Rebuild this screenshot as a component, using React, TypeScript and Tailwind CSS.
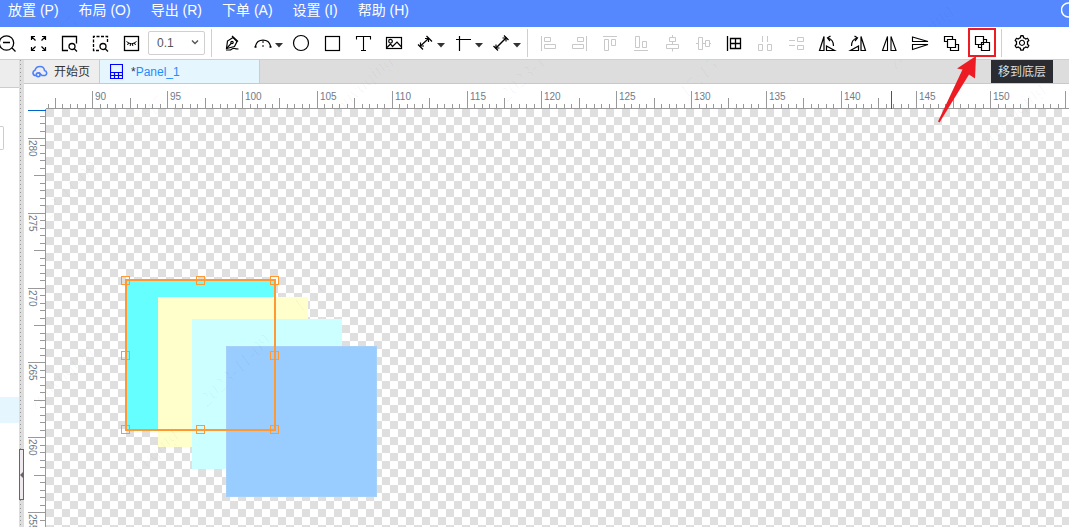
import React, { useEffect, useState } from "react";
import { AiOutlineSetting } from "react-icons/ai";

const menus = ["放置 (P)", "布局 (O)", "导出 (R)", "下单 (A)", "设置 (I)", "帮助 (H)"];

function Icon({ children, wide }: { children: React.ReactNode; wide?: boolean }) {
  return (
    <svg
      viewBox={wide ? "-15 -16 38 32" : "-15 -16 31 32"}
      width={wide ? 38 : 31}
      height={32}
      fill="none"
      stroke="currentColor"
      strokeWidth="1"
      aria-hidden="true"
    >
      {children}
      {wide && <path d="M12 0h8l-4 4.5z" fill="#333" stroke="none" />}
    </svg>
  );
}

type Tool = {
  label: string;
  icon: React.ReactNode;
  wide?: boolean;
  disabled?: boolean;
};

const viewTools: Tool[] = [
  {
    label: "缩小",
    icon: (
      <g strokeWidth="1.3">
        <circle cx="-0.5" cy="0" r="7.2" />
        <path d="M-4-.5h7M5 5l3.5 3.5" />
      </g>
    ),
  },
  {
    label: "适应全部",
    icon: (
      <g strokeWidth="1.2">
        <path d="M-6.500-3v-3.500h3.500M-6.500-6.500l4 4M7.500-3v-3.500h-3.500M7.500-6.500l-4 4M-6.500 4v3.500h3.500M-6.500 7.500l4-4M7.500 4v3.500h-3.500M7.500 7.500l-4-4" />
      </g>
    ),
  },
  {
    label: "缩放区域",
    icon: (
      <g>
        <path d="M-1 7.5h-5.500v-14h14v7" strokeWidth="1.3" />
        <circle cx="3" cy="3.5" r="3" strokeWidth="1.3" />
        <path d="M5.500 6l2.500 2.500" strokeWidth="1.300" />
      </g>
    ),
  },
  {
    label: "适应选中",
    icon: (
      <g>
        <path d="M-1 7.5h-5.500v-14h14v7" strokeWidth="1.3" strokeDasharray="3 1.500" />
        <circle cx="3" cy="3.5" r="3" strokeWidth="1.3" />
        <path d="M5.500 6l2.500 2.500" strokeWidth="1.300" />
      </g>
    ),
  },
  {
    label: "预览",
    icon: (
      <g>
        <rect x="-6.500" y="-6.500" width="14" height="14" strokeWidth="1.3" />
        <path d="M-4.500-1.500Q.5 3 5.500-1.500M-3.500 2l1.200-2.200M4.500 2L3.300-.2M-.8 3L-.5.8M1.800 3L1.500.8" />
      </g>
    ),
  },
];

const drawTools: Tool[] = [
  {
    label: "钢笔",
    icon: (
      <g strokeWidth="1.2">
        <path d="M-5.500 5.500L-4.500-2L1-5.500L5-1.500L2.500 3.500Z" />
        <path d="M0-7l6 5.500M-5.500 5.500L-.5.2" />
        <circle cx="0" cy="-.5" r="1.200" />
        <path d="M-6 7h4.500Q1 5 2.500 5.500T6.500 6" />
      </g>
    ),
  },
  {
    label: "圆弧",
    wide: true,
    icon: (
      <g>
        <path d="M-7.500 4v-1A7.700 7.700 0 0 1 7.500 3v1" strokeWidth="1.2" />
        <path d="M0-2v2M0 2v2" />
        <path d="M-8.500 4h2M6.500 4h2" strokeWidth="1.600" />
      </g>
    ),
  },
  { label: "圆形", icon: <circle cx="0" cy="0" r="7.500" strokeWidth="1.2" /> },
  { label: "矩形", icon: <rect x="-6.500" y="-6.500" width="14" height="14" strokeWidth="1.2" /> },
  { label: "文本", icon: <path d="M-6.500-3.500v-3h14v3M.5-6.500v14M-2 7.500h5" strokeWidth="1.1" /> },
  {
    label: "图片",
    icon: (
      <g strokeWidth="1.2">
        <rect x="-7.500" y="-5.500" width="15" height="11" />
        <circle cx="-3.500" cy="-1.800" r="1.800" />
        <path d="M-7 4.500L-3.500 1L-1.500 3.500L3-1L7 3.500" />
      </g>
    ),
  },
  {
    label: "尺寸",
    wide: true,
    icon: (
      <g strokeWidth="1.2">
        <path d="M-4 2.500L3-4" />
        <path d="M-7 1.500L-2 6.500M1.500-7L7-1.500" />
        <path d="M-4.500-.5v3.500h3.500M0-4.500h3.500v3.500" />
      </g>
    ),
  },
  { label: "画布原点", wide: true, icon: <path d="M-3.500-7v15M-7-3.500h15" strokeWidth="1.2" /> },
  {
    label: "测量",
    wide: true,
    icon: (
      <g strokeWidth="1.2">
        <path d="M-5 5L5-5" strokeWidth="1.400" />
        <path d="M-7.500 3l4.500 4.500M3-7.500l4.500 4.500" />
        <path d="M-5 1.500v3.500h3.500M1.500-5h3.500v3.500" />
      </g>
    ),
  },
];

const arrangeTools: Tool[] = [
  { label: "左对齐", disabled: true, icon: <path d="M-6.500-7v15M-3.500-5.500h6v4h-6zM-3.500 1.500h11v4h-11z" /> },
  { label: "右对齐", disabled: true, icon: <path d="M7.500-7v15M-1.500-5.500h6v4h-6zM-6.500 1.500h11v4h-11z" /> },
  { label: "顶部对齐", disabled: true, icon: <path d="M-7-6.500h14M-5.500-3.500h4v11h-4zM1.500-3.500h4v6h-4z" /> },
  { label: "底部对齐", disabled: true, icon: <path d="M-7 7.500h14M-5.500-6.500h4v11h-4zM1.500-1.500h4v6h-4z" /> },
  { label: "水平居中", disabled: true, icon: <path d="M.5-8v3M.5-1v2.500M.5 5.500v3M-2.500-5.500h6v4h-6zM-5.500 1.500h12v4h-12z" /> },
  { label: "垂直居中", disabled: true, icon: <path d="M-7 .5h2M-1 .5h3M6 .5h2M-4.500-5.500h4v12h-4zM2.500-2.500h4v6h-4z" /> },
  {
    label: "对齐网格",
    icon: <path d="M-6.500-7v15M-3.500-4.500h10v10h-10zM1.500-4.500v10M-3.500.5h10" strokeWidth="1.3" />,
  },
  { label: "水平分布", disabled: true, icon: <path d="M-2.500-7v6M2.500-7v6M-6.500 1.500h4v6h-4zM2.500 1.500h4v6h-4z" /> },
  { label: "垂直分布", disabled: true, icon: <path d="M-7-2.500h6M-7 2.500h6M1.500-5.500h6v4h-6zM1.500 2.500h6v4h-6z" /> },
  {
    label: "左旋转",
    icon: (
      <g strokeWidth="1.2">
        <path d="M-7.500 7.500L-3-6.500v14zM-.5 3v4.500h8z" />
        <path d="M1-5q5.500 1.500 5.500 8M3.500-7L.5-5l2.500 3" />
      </g>
    ),
  },
  {
    label: "右旋转",
    icon: (
      <g strokeWidth="1.2">
        <path d="M7.500 7.500L3-6.500v14zM.5 3v4.500h-8z" />
        <path d="M-1-5q-5.500 1.500-5.500 8M-3.500-7L-.5-5l-2.500 3" />
      </g>
    ),
  },
  { label: "水平翻转", icon: <path d="M-6.500 7.500L-1.500-6.500v14zM7 7.500L2-6.500v14z" strokeWidth="1.1" /> },
  { label: "垂直翻转", icon: <path d="M-7.500-6L8-1.500h-15.500zM-7.500 6.500L8 1.500h-15.500z" strokeWidth="1.1" /> },
  {
    label: "移到顶层",
    icon: <path d="M-3.500-1.500h-3v-5h8v3M4.500 1.500h3v6h-8v-3M-3.500-3.500h8v8h-8z" strokeWidth="1.2" />,
  },
];

function ToolButton({ tool }: { tool: Tool }) {
  return (
    <button
      type="button"
      aria-label={tool.label}
      disabled={tool.disabled}
      className="shrink-0 text-black disabled:text-[#c9c9c9]"
    >
      <Icon wide={tool.wide}>{tool.icon}</Icon>
    </button>
  );
}

function Divider() {
  return <span className="h-7 w-px shrink-0 bg-[#cfcfcf]" />;
}

const STEP = 7.483;

function useWindowSize() {
  const read = () => ({ width: window.innerWidth, height: window.innerHeight });
  const [size, setSize] = useState(read);
  useEffect(() => {
    const update = () => setSize(read());
    window.addEventListener("resize", update);
    return () => window.removeEventListener("resize", update);
  }, []);
  return size;
}

function ticksBetween(origin: number, from: number, to: number) {
  const first = Math.ceil((from - origin) / STEP);
  const last = Math.floor((to - origin) / STEP);
  return Array.from({ length: Math.max(0, last - first + 1) }, (_, i) => first + i);
}

function TopRuler({ length }: { length: number }) {
  return (
    <svg className="block h-[25px] w-full bg-white" aria-hidden="true">
      {ticksBetween(68.4, 22, length).map((n) => {
        const x = Math.round(68.4 + n * STEP);
        const major = n % 10 === 0;
        const h = major ? 18 : n % 5 === 0 ? 11 : 5;
        return (
          <g key={n}>
            <rect x={x} y={25 - h} width="1" height={h} fill="#999" />
            {major && x + 20 < length && (
              <text x={x + 3} y="16" fontSize="10" fill="#6f7b8a" fontFamily="Liberation Sans, Arial, sans-serif">
                {90 + n / 2}
              </text>
            )}
          </g>
        );
      })}
      <rect x="22" y="24" width="100%" height="1" fill="#999" />
      <rect x="867" y="7" width="1" height="18" fill="#0066cc" />
    </svg>
  );
}

function SideRuler({ length }: { length: number }) {
  return (
    <svg className="block h-full w-[22px] shrink-0 bg-white" aria-hidden="true">
      {ticksBetween(29, 6, length).map((n) => {
        const y = Math.round(29 + n * STEP);
        const major = n % 10 === 0;
        const w = major ? 18 : n % 5 === 0 ? 12 : 6;
        return (
          <g key={n}>
            <rect x={22 - w} y={y} width={w} height="1" fill="#999" />
            {major && (
              <text
                transform={`translate(5 ${y + 2}) rotate(90)`}
                fontSize="10"
                fill="#6f7b8a"
                fontFamily="Liberation Sans, Arial, sans-serif"
              >
                {280 - n / 2}
              </text>
            )}
          </g>
        );
      })}
      <rect x="21" y="0" width="1" height="100%" fill="#999" />
      <rect x="4" y="1" width="18" height="1" fill="#0066cc" />
    </svg>
  );
}

const handles = [
  [4, 4], [79, 4], [153, 4],
  [4, 79], [153, 79],
  [4, 153], [79, 153], [153, 153],
];

function Canvas() {
  return (
    <div className="relative min-w-0 flex-1 overflow-hidden bg-[repeating-conic-gradient(#ffffff_0_25%,#dfdfdf_0_50%)] bg-[length:16px_16px]">
      <div className="absolute left-[79px] top-[171px] size-[150px] bg-[#66ffff]" />
      <div className="absolute left-[112px] top-[188px] size-[150px] bg-[#ffffcc]" />
      <div className="absolute left-[146px] top-[210px] size-[150px] bg-[#ccffff]" />
      <div className="absolute left-[180px] top-[237px] size-[151px] border border-[#a5d0fa] bg-[#99ccff]" />
      <svg className="absolute left-[75px] top-[167px]" width="160" height="160" fill="none" stroke="#ff9933" aria-hidden="true">
        <rect x="5" y="4" width="149" height="150" strokeWidth="2" />
        {handles.map(([x, y]) => (
          <rect key={`${x}-${y}`} x={x - 3.5} y={y - 3.5} width="8" height="8" />
        ))}
      </svg>
    </div>
  );
}

function Marks() {
  const base =
    "absolute -translate-x-1/2 -translate-y-1/2 -rotate-45 whitespace-nowrap font-['Liberation_Serif',serif] text-xl italic text-black/3";
  return (
    <div className="pointer-events-none absolute inset-0 overflow-hidden" aria-hidden="true">
      <span className={`${base} left-[58px] top-[36px]`}>17:15</span>
      <span className={`${base} left-[146px] top-[115px]`}>17:15</span>
      <span className={`${base} left-[360px] top-[86px]`}>zouyuqing</span>
      <span className={`${base} left-[535px] top-[65px]`}>2023-11-09</span>
      <span className={`${base} left-[698px] top-[78px]`}>17:15</span>
      <span className={`${base} left-[920px] top-[36px]`}>zouyuqing</span>
      <span className={`${base} left-[1012px] top-[114px]`}>zouyuqing</span>
      <span className={`${base} left-[62px] top-[197px]`}>2023-11-09</span>
      <span className={`${base} left-[60px] top-[376px]`}>zouyuqing</span>
      <span className={`${base} left-[235px] top-[370px]`}>2023-11-09</span>
      <span className={`${base} left-[145px] top-[460px]`}>zouyuqing</span>
      <span className={`${base} left-[312px] top-[292px]`}>17:15</span>
    </div>
  );
}

export default function App() {
  const { width, height } = useWindowSize();
  return (
    <div className="relative flex h-screen flex-col overflow-hidden bg-white font-['Liberation_Sans','Noto_Sans_CJK_SC',sans-serif] text-xs text-[#333]">
      <nav className="flex h-[27px] shrink-0 items-start justify-between overflow-hidden bg-[#5588ff] pl-2 text-white">
        <div className="flex items-center gap-5 text-sm">
          {menus.map((m) => (
            <button key={m} type="button" className="whitespace-nowrap leading-5">
              {m}
            </button>
          ))}
        </div>
        <button type="button" aria-label="搜索" className="-mr-2 mt-0.5 shrink-0">
          <svg width="16" height="16" fill="none" stroke="currentColor" strokeWidth="1.500" aria-hidden="true">
            <circle cx="7.500" cy="8" r="7" />
          </svg>
        </button>
      </nav>

      <div className="z-10 flex h-[33px] shrink-0 items-center border-b border-[#cfcfcf] bg-white">
        <div className="-ml-2 flex shrink-0">
          {viewTools.map((t) => (
            <ToolButton key={t.label} tool={t} />
          ))}
        </div>
        <label className="relative ml-px mr-1.5 flex shrink-0 items-center">
          <select
            aria-label="网格尺寸"
            defaultValue="0.1"
            className="h-6 w-[57px] appearance-none rounded-xs border border-[#d0d0d0] bg-white pl-2 text-xs text-[#555]"
          >
            <option>0.1</option>
            <option>0.5</option>
            <option>1</option>
          </select>
          <svg className="pointer-events-none absolute right-1.5" width="8" height="8" fill="none" stroke="#555" strokeWidth="1.400" aria-hidden="true">
            <path d="M1 1.500l3 3 3-3" />
          </svg>
        </label>
        <Divider />
        <div className="ml-[5px] flex shrink-0">
          {drawTools.map((t) => (
            <ToolButton key={t.label} tool={t} />
          ))}
        </div>
        <span className="ml-[3px] flex">
          <Divider />
        </span>
        <div className="ml-[5px] flex shrink-0">
          {arrangeTools.map((t) => (
            <ToolButton key={t.label} tool={t} />
          ))}
          <div className="relative flex shrink-0">
            <button type="button" aria-label="移到底层" aria-describedby="tip" className="text-black">
              <Icon>
                <path
                  d="M-6.500-6.500h8v8h-8zM-.5-.5h8v8h-8zM1.500-3.500h3v3M-3.500 1.500v3h3"
                  strokeWidth="1.2"
                />
              </Icon>
            </button>
            <span className="pointer-events-none absolute left-px top-px h-[29px] w-7 border-2 border-[#ed1c24]" />
            <span
              id="tip"
              role="tooltip"
              className="absolute left-6 top-[33px] flex h-[23px] w-[62px] items-center justify-center whitespace-nowrap bg-[#2a2c31] text-[#dddddd]"
            >
              移到底层
            </span>
            <svg
              className="pointer-events-none absolute -left-[30px] top-7"
              width="42"
              height="70"
              fill="#ed1c24"
              aria-hidden="true"
            >
              <path d="M39 1L20 13.500L25.500 14.500L1 66.500L2.500 67.500L32 19.500L38 23.500Z" />
            </svg>
          </div>
        </div>
        <span className="ml-[3px] flex">
          <Divider />
        </span>
        <button type="button" aria-label="设置" className="ml-[11px] shrink-0 text-black">
          <AiOutlineSetting size={18} />
        </button>
      </div>

      <div className="flex min-h-0 flex-1">
        <aside className="flex w-[19px] shrink-0 flex-col bg-white">
          <div className="h-7 border-b border-[#cccccc] bg-[#ededed]" />
          <input
            aria-label="过滤"
            className="mt-[38px] h-6 w-1 rounded-r-xs border border-l-0 border-[#cccccc]"
          />
          <div className="mt-[247px] h-[26px] bg-[#e5f6ff]" />
        </aside>
        <div className="relative w-[5px] shrink-0 bg-[#dddddd]">
          <div className="ml-px h-full w-px bg-[repeating-linear-gradient(#999999_0_1px,transparent_1px_4px)]" />
          <button
            type="button"
            aria-label="收起面板"
            className="absolute left-0 top-[389px] flex h-[51px] w-[5px] items-center justify-center border border-[#6b6468] bg-[#eeeaee]"
          >
            <svg width="3" height="6" fill="#6b6468" aria-hidden="true">
              <path d="M0 3L3 0v6z" />
            </svg>
          </button>
        </div>

        <main className="flex min-w-0 flex-1 flex-col">
          <div role="tablist" className="flex h-6 shrink-0 border-b border-[#c9c9c9] bg-[#dddddd]">
            <button
              type="button"
              role="tab"
              className="flex w-[76px] items-center gap-1.5 border-r border-[#cccccc] bg-[#eeeeee] pl-2"
            >
              <svg width="16" height="14" fill="none" stroke="#4d80ff" strokeWidth="1.600" aria-hidden="true">
                <path d="M5 10.500H3.500A2.700 2.700 0 0 1 3 5.200Q4 1.500 8 1.500T12.500 5.500A2.600 2.600 0 0 1 13 10.500H10L7 7.500" />
                <circle cx="6.200" cy="9.800" r="1.900" />
              </svg>
              <span className="whitespace-nowrap">开始页</span>
            </button>
            <button
              type="button"
              role="tab"
              aria-selected="true"
              className="flex w-40 items-center gap-2 border-r border-[#cccccc] bg-[#e5f6ff] pl-2.5"
            >
              <svg width="13" height="15" fill="none" stroke="#0000ff" strokeWidth="1" aria-hidden="true">
                <path d="M.5.5h12v14H.5zM.5 8.500h12M.5 11.500h12M4.500 8.500v6M8.500 8.500v6" strokeWidth="1.2" />
              </svg>
              <span className="whitespace-nowrap text-[#1f8cff]">
                <span className="text-[#333]">*</span>Panel_1
              </span>
            </button>
          </div>
          <TopRuler length={width - 24} />
          <div className="flex min-h-0 flex-1">
            <SideRuler length={height - 109} />
            <Canvas />
          </div>
        </main>
      </div>
      <Marks />
    </div>
  );
}
